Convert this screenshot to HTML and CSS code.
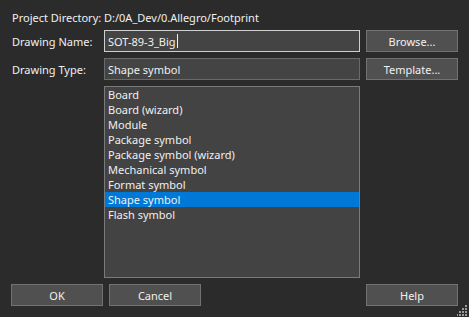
FILE: index.html
```html
<!DOCTYPE html>
<html lang="en">
<head>
  <meta charset="UTF-8">
  <title>New Drawing</title>
  <link rel="stylesheet" href="styles.css">
</head>
<body>

<div class="dialog">
  <div class="label">Project Directory:</div>
  <div class="path">D:/0A_Dev/0.Allegro/Footprint</div>

  <div class="label">Drawing Name:</div>
  <div class="field field-edit">SOT-89-3_Big<span class="caret"></span></div>
  <button class="btn">Browse...</button>

  <div class="label">Drawing Type:</div>
  <div class="field">Shape symbol</div>
  <button class="btn">Template...</button>

  <ul class="type-list">
    <li>Board</li>
    <li>Board (wizard)</li>
    <li>Module</li>
    <li>Package symbol</li>
    <li>Package symbol (wizard)</li>
    <li>Mechanical symbol</li>
    <li>Format symbol</li>
    <li class="selected">Shape symbol</li>
    <li>Flash symbol</li>
  </ul>

  <div class="footer">
    <button class="btn">OK</button>
    <button class="btn">Cancel</button>
    <button class="btn help">Help</button>
  </div>
</div>

<!-- poignée de redimensionnement -->
<svg class="grip" width="11" height="11" viewBox="0 0 11 11">
  <g fill="#9a9a9a">
    <rect x="8" y="0" width="2" height="2"/>
    <rect x="5" y="3" width="2" height="2"/>
    <rect x="8" y="3" width="2" height="2"/>
    <rect x="2" y="6" width="2" height="2"/>
    <rect x="5" y="6" width="2" height="2"/>
    <rect x="8" y="6" width="2" height="2"/>
    <rect x="-1" y="9" width="2" height="2"/>
    <rect x="2" y="9" width="2" height="2"/>
    <rect x="5" y="9" width="2" height="2"/>
    <rect x="8" y="9" width="2" height="2"/>
  </g>
</svg>

</body>
</html>
```

FILE: styles.css
```css
html, body {
  margin: 0;
  height: 100%;
}

body {
  background-color: #2b2b2b;
  font-family: "Noto Sans", "Open Sans", sans-serif;
  font-size: 11px;
  color: #f0f0f0;
  position: relative;
  overflow: hidden;
}

.dialog {
  display: grid;
  grid-template-columns: 87px 256px 92px;
  grid-template-rows: 14px 22px 22px 192px 22px;
  column-gap: 6px;
  row-gap: 6px;
  padding: 10px 0 0 11px;
}

.label {
  padding-left: 1px;
  display: flex;
  align-items: center;
  white-space: nowrap;
}

.path {
  grid-column: 2 / 4;
  display: flex;
  align-items: center;
}

.field {
  box-sizing: border-box;
  background-color: #444444;
  border: 1px solid #6a6a6a;
  padding: 0 3px;
  display: flex;
  align-items: center;
}

.field-edit {
  border-color: #cfcfcf;
}

.caret {
  display: inline-block;
  width: 1px;
  height: 14px;
  background-color: #f0f0f0;
  margin-left: 1px;
}

.btn {
  box-sizing: border-box;
  width: 92px;
  height: 22px;
  background-color: #505050;
  border: 1px solid #727272;
  color: #f0f0f0;
  font-family: inherit;
  font-size: 11px;
  padding: 0;
}

.type-list {
  grid-column: 2;
  box-sizing: border-box;
  margin: 0;
  padding: 0;
  list-style: none;
  background-color: #434343;
  border: 1px solid #7a7a7a;
}

.type-list li {
  height: 15px;
  line-height: 15px;
  padding-left: 3px;
}

.type-list li.selected {
  background-color: #0078d7;
}

.footer {
  grid-column: 1 / 4;
  display: flex;
  gap: 6px;
}

.footer .help {
  margin-left: auto;
}

.grip {
  position: absolute;
  right: 1px;
  bottom: 1px;
}
```
